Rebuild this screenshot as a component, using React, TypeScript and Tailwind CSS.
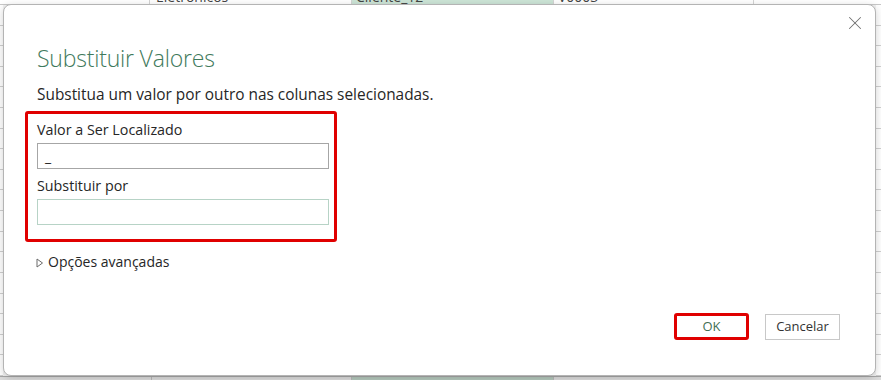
import { X } from 'lucide-react';

const sheetRows = [
  ['', 'Eletrônicos', 'Cliente_12', 'V0003', ''],
  ['', '', '', '', ''],
];

function SheetBackdrop() {
  return (
    <div className="absolute inset-0 bg-[#f2f2f2]">
      <div className="flex h-[5px] overflow-hidden border-b border-[#c8c8c8] bg-white">
        <div className="w-[150px] shrink-0 border-r border-[#d4d4d4]" />
        <div className="flex w-[202px] shrink-0 items-end border-r border-[#d4d4d4] pl-[6px] text-[14px] leading-[14px] text-[#444]">
          {sheetRows[0][1]}
        </div>
        <div className="flex w-[202px] shrink-0 items-end border-r border-[#d4d4d4] bg-[#cde5d7] pl-[4px] text-[14px] leading-[14px] text-[#444]">
          {sheetRows[0][2]}
        </div>
        <div className="flex w-[200px] shrink-0 items-end border-r border-[#d4d4d4] pl-[4px] text-[14px] leading-[14px] text-[#444]">
          {sheetRows[0][3]}
        </div>
        <div className="flex-1" />
      </div>
      <div className="absolute bottom-0 left-0 right-0 flex h-[4px] border-t border-[#a8a8a8] bg-[#dcdcdc]">
        <div className="w-[152px] shrink-0 border-r border-[#b8b8b8]" />
        <div className="w-[200px] shrink-0 border-r border-[#b8b8b8]" />
        <div className="w-[202px] shrink-0 border-r border-[#b8b8b8] bg-[#b4c8bc]" />
        <div className="flex-1" />
      </div>
      <div className="absolute bottom-[4px] right-0 top-[5px] flex w-[5px] flex-col bg-white">
        {Array.from({ length: 18 }).map((_, i) => (
          <div key={i} className="h-[21px] border-b border-[#d0d0d0]" />
        ))}
      </div>
      <div className="absolute bottom-[4px] left-0 top-[5px] flex w-[3px] flex-col bg-white">
        {Array.from({ length: 18 }).map((_, i) => (
          <div key={i} className="h-[21px] border-b border-[#d0d0d0]" />
        ))}
      </div>
    </div>
  );
}

export default function App() {
  return (
    <div
      className="relative h-[380px] w-[881px] overflow-hidden"
      style={{ fontFamily: '"Open Sans", "Noto Sans", sans-serif' }}
    >
      <SheetBackdrop />

      <div className="absolute left-[3px] top-[4px] flex h-[372px] w-[873px] flex-col rounded-[8px] border border-[#b4b4b4] bg-white shadow-[0_2px_8px_rgba(0,0,0,0.18)]">
        <button className="absolute right-[9px] top-[7px] text-[#707070]">
          <X size={22} strokeWidth={1.1} />
        </button>

        <div className="flex flex-1 flex-col pl-[33px] pt-[38px]">
          <h1 className="text-[23px] font-light leading-[30px] tracking-[-0.2px] text-[#3f7a5c]">
            Substituir Valores
          </h1>
          <p className="mt-[12px] text-[15.4px] leading-[20px] text-[#262626]">
            Substitua um valor por outro nas colunas selecionadas.
          </p>

          <div className="ml-[-12px] mt-[6px] w-[312px] rounded-[3px] border-[3px] border-[#e00000] px-[9px] pb-[14px] pt-[6px]">
            <label className="block text-[14.3px] leading-[20px] text-[#262626]">
              Valor a Ser Localizado
            </label>
            <div className="mt-[3px] flex h-[26px] w-[292px] items-end border border-[#a6a6a6] px-[7px] pb-[2px] text-[14px] leading-[18px] text-[#262626]">
              _
            </div>
            <label className="mt-[7px] block text-[14.3px] leading-[20px] text-[#262626]">
              Substituir por
            </label>
            <div className="mt-[3px] h-[26px] w-[292px] border border-[#b7d3c6]" />
          </div>

          <div className="mt-[10px] flex items-center gap-[4px] text-[14px] leading-[20px] text-[#262626]">
            <svg width="8" height="10" viewBox="0 0 8 10" className="ml-[-1px] mt-[1px]">
              <path d="M1 1 L6.5 5 L1 9 Z" fill="none" stroke="#6b6b6b" strokeWidth="1" />
            </svg>
            <span>Opções avançadas</span>
          </div>
        </div>

        <div className="flex items-center justify-end gap-[16px] pb-[35px] pr-[35px]">
          <div className="rounded-[3px] border-[3px] border-[#e00000] p-[1px]">
            <button className="flex h-[19px] w-[67px] items-center justify-center text-[13px] text-[#3f6f55]">
              OK
            </button>
          </div>
          <button className="flex h-[26px] w-[75px] items-center justify-center border border-[#c8c8c8] text-[13px] text-[#333]">
            Cancelar
          </button>
        </div>
      </div>
    </div>
  );
}
